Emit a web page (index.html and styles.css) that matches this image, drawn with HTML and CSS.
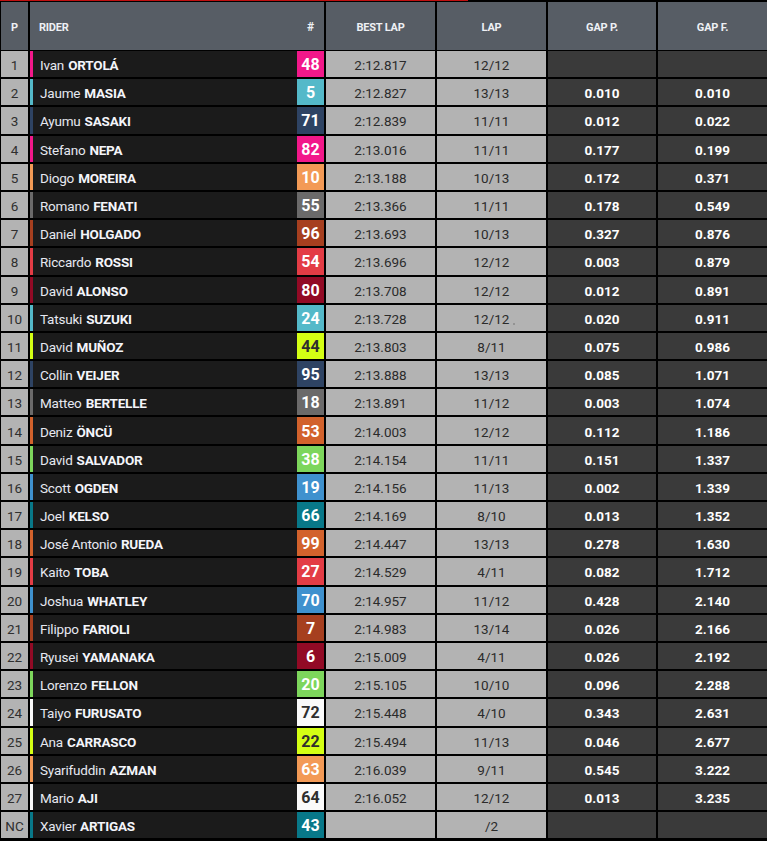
FILE: index.html
```html
<!DOCTYPE html>
<html>
<head>
<meta charset="utf-8">
<link rel="stylesheet" href="styles.css">
</head>
<body>
<div class="topline"></div>
<div class="table">
  <div class="row head">
    <div class="cell p">P</div>
    <div class="cell rider-h"><span>RIDER</span><span class="hash">#</span></div>
    <div class="cell">BEST LAP</div>
    <div class="cell">LAP</div>
    <div class="cell">GAP P.</div>
    <div class="cell">GAP F.</div>
  </div>
  <div class="row"><div class="cell p">1</div><div class="rider c-pink"><div class="name">Ivan <b>ORTOLÁ</b></div><div class="num">48</div></div><div class="cell lt">2:12.817</div><div class="cell lt">12/12</div><div class="cell gap"></div><div class="cell gap"></div></div>
  <div class="row"><div class="cell p">2</div><div class="rider c-teal"><div class="name">Jaume <b>MASIA</b></div><div class="num">5</div></div><div class="cell lt">2:12.827</div><div class="cell lt">13/13</div><div class="cell gap">0.010</div><div class="cell gap">0.010</div></div>
  <div class="row"><div class="cell p">3</div><div class="rider c-navy"><div class="name">Ayumu <b>SASAKI</b></div><div class="num">71</div></div><div class="cell lt">2:12.839</div><div class="cell lt">11/11</div><div class="cell gap">0.012</div><div class="cell gap">0.022</div></div>
  <div class="row"><div class="cell p">4</div><div class="rider c-pink"><div class="name">Stefano <b>NEPA</b></div><div class="num">82</div></div><div class="cell lt">2:13.016</div><div class="cell lt">11/11</div><div class="cell gap">0.177</div><div class="cell gap">0.199</div></div>
  <div class="row"><div class="cell p">5</div><div class="rider c-lorange"><div class="name">Diogo <b>MOREIRA</b></div><div class="num">10</div></div><div class="cell lt">2:13.188</div><div class="cell lt">10/13</div><div class="cell gap">0.172</div><div class="cell gap">0.371</div></div>
  <div class="row"><div class="cell p">6</div><div class="rider c-gray"><div class="name">Romano <b>FENATI</b></div><div class="num">55</div></div><div class="cell lt">2:13.366</div><div class="cell lt">11/11</div><div class="cell gap">0.178</div><div class="cell gap">0.549</div></div>
  <div class="row"><div class="cell p">7</div><div class="rider c-brown"><div class="name">Daniel <b>HOLGADO</b></div><div class="num">96</div></div><div class="cell lt">2:13.693</div><div class="cell lt">10/13</div><div class="cell gap">0.327</div><div class="cell gap">0.876</div></div>
  <div class="row"><div class="cell p">8</div><div class="rider c-red"><div class="name">Riccardo <b>ROSSI</b></div><div class="num">54</div></div><div class="cell lt">2:13.696</div><div class="cell lt">12/12</div><div class="cell gap">0.003</div><div class="cell gap">0.879</div></div>
  <div class="row"><div class="cell p">9</div><div class="rider c-dred"><div class="name">David <b>ALONSO</b></div><div class="num">80</div></div><div class="cell lt">2:13.708</div><div class="cell lt">12/12</div><div class="cell gap">0.012</div><div class="cell gap">0.891</div></div>
  <div class="row"><div class="cell p">10</div><div class="rider c-teal"><div class="name">Tatsuki <b>SUZUKI</b></div><div class="num">24</div></div><div class="cell lt">2:13.728</div><div class="cell lt">12/12<span class="dot"></span></div><div class="cell gap">0.020</div><div class="cell gap">0.911</div></div>
  <div class="row"><div class="cell p">11</div><div class="rider c-lime"><div class="name">David <b>MUÑOZ</b></div><div class="num">44</div></div><div class="cell lt">2:13.803</div><div class="cell lt">8/11</div><div class="cell gap">0.075</div><div class="cell gap">0.986</div></div>
  <div class="row"><div class="cell p">12</div><div class="rider c-navy"><div class="name">Collin <b>VEIJER</b></div><div class="num">95</div></div><div class="cell lt">2:13.888</div><div class="cell lt">13/13</div><div class="cell gap">0.085</div><div class="cell gap">1.071</div></div>
  <div class="row"><div class="cell p">13</div><div class="rider c-gray"><div class="name">Matteo <b>BERTELLE</b></div><div class="num">18</div></div><div class="cell lt">2:13.891</div><div class="cell lt">11/12</div><div class="cell gap">0.003</div><div class="cell gap">1.074</div></div>
  <div class="row"><div class="cell p">14</div><div class="rider c-orange"><div class="name">Deniz <b>ÖNCÜ</b></div><div class="num">53</div></div><div class="cell lt">2:14.003</div><div class="cell lt">12/12</div><div class="cell gap">0.112</div><div class="cell gap">1.186</div></div>
  <div class="row"><div class="cell p">15</div><div class="rider c-green"><div class="name">David <b>SALVADOR</b></div><div class="num">38</div></div><div class="cell lt">2:14.154</div><div class="cell lt">11/11</div><div class="cell gap">0.151</div><div class="cell gap">1.337</div></div>
  <div class="row"><div class="cell p">16</div><div class="rider c-blue"><div class="name">Scott <b>OGDEN</b></div><div class="num">19</div></div><div class="cell lt">2:14.156</div><div class="cell lt">11/13</div><div class="cell gap">0.002</div><div class="cell gap">1.339</div></div>
  <div class="row"><div class="cell p">17</div><div class="rider c-dteal"><div class="name">Joel <b>KELSO</b></div><div class="num">66</div></div><div class="cell lt">2:14.169</div><div class="cell lt">8/10</div><div class="cell gap">0.013</div><div class="cell gap">1.352</div></div>
  <div class="row"><div class="cell p">18</div><div class="rider c-orange"><div class="name">José Antonio <b>RUEDA</b></div><div class="num">99</div></div><div class="cell lt">2:14.447</div><div class="cell lt">13/13</div><div class="cell gap">0.278</div><div class="cell gap">1.630</div></div>
  <div class="row"><div class="cell p">19</div><div class="rider c-red"><div class="name">Kaito <b>TOBA</b></div><div class="num">27</div></div><div class="cell lt">2:14.529</div><div class="cell lt">4/11</div><div class="cell gap">0.082</div><div class="cell gap">1.712</div></div>
  <div class="row"><div class="cell p">20</div><div class="rider c-blue"><div class="name">Joshua <b>WHATLEY</b></div><div class="num">70</div></div><div class="cell lt">2:14.957</div><div class="cell lt">11/12</div><div class="cell gap">0.428</div><div class="cell gap">2.140</div></div>
  <div class="row"><div class="cell p">21</div><div class="rider c-brown"><div class="name">Filippo <b>FARIOLI</b></div><div class="num">7</div></div><div class="cell lt">2:14.983</div><div class="cell lt">13/14</div><div class="cell gap">0.026</div><div class="cell gap">2.166</div></div>
  <div class="row"><div class="cell p">22</div><div class="rider c-dred"><div class="name">Ryusei <b>YAMANAKA</b></div><div class="num">6</div></div><div class="cell lt">2:15.009</div><div class="cell lt">4/11</div><div class="cell gap">0.026</div><div class="cell gap">2.192</div></div>
  <div class="row"><div class="cell p">23</div><div class="rider c-green"><div class="name">Lorenzo <b>FELLON</b></div><div class="num">20</div></div><div class="cell lt">2:15.105</div><div class="cell lt">10/10</div><div class="cell gap">0.096</div><div class="cell gap">2.288</div></div>
  <div class="row"><div class="cell p">24</div><div class="rider c-white"><div class="name">Taiyo <b>FURUSATO</b></div><div class="num">72</div></div><div class="cell lt">2:15.448</div><div class="cell lt">4/10</div><div class="cell gap">0.343</div><div class="cell gap">2.631</div></div>
  <div class="row"><div class="cell p">25</div><div class="rider c-lime"><div class="name">Ana <b>CARRASCO</b></div><div class="num">22</div></div><div class="cell lt">2:15.494</div><div class="cell lt">11/13</div><div class="cell gap">0.046</div><div class="cell gap">2.677</div></div>
  <div class="row"><div class="cell p">26</div><div class="rider c-lorange"><div class="name">Syarifuddin <b>AZMAN</b></div><div class="num">63</div></div><div class="cell lt">2:16.039</div><div class="cell lt">9/11</div><div class="cell gap">0.545</div><div class="cell gap">3.222</div></div>
  <div class="row"><div class="cell p">27</div><div class="rider c-white"><div class="name">Mario <b>AJI</b></div><div class="num">64</div></div><div class="cell lt">2:16.052</div><div class="cell lt">12/12</div><div class="cell gap">0.013</div><div class="cell gap">3.235</div></div>
  <div class="row"><div class="cell p">NC</div><div class="rider c-dteal"><div class="name">Xavier <b>ARTIGAS</b></div><div class="num">43</div></div><div class="cell lt"></div><div class="cell lt">/2</div><div class="cell gap"></div><div class="cell gap"></div></div>
</div>
</body>
</html>
```
FILE: styles.css
```css
html, body {
  margin: 0;
  padding: 0;
  background: #000;
}
body {
  font-family: Roboto, "Liberation Sans", sans-serif;
  font-size: 13.5px;
  width: 767px;
  height: 841px;
  overflow: hidden;
}
.topline {
  width: 468px;
  height: 1px;
  background: #c01010;
}
.table {
  margin-top: 1px;
  padding-left: 1px;
  display: flex;
  flex-direction: column;
  row-gap: 2px;
}
.row {
  display: grid;
  grid-template-columns: 27px 294px 109px 109px 108px 109px;
  column-gap: 2px;
  height: 26.2px;
}
.row.head {
  height: 48px;
  margin-bottom: -1px;
}
.cell {
  display: flex;
  align-items: center;
  justify-content: center;
  position: relative;
  padding-top: 2px;
}
.head .cell {
  background: #575d65;
  color: #eef0f4;
  font-weight: 700;
  font-size: 11px;
  letter-spacing: -0.2px;
}
.head .rider-h {
  justify-content: space-between;
  padding: 2px 10px 0 9px;
}
.head .hash {
  font-size: 12px;
}
.row .p {
  background: #b3b3b3;
  color: #2f2f2f;
}
.head .p {
  background: #575d65;
  color: #eef0f4;
}
.lt {
  background: #b3b3b3;
  color: #2b2b2b;
}
.gap {
  background: #3a3a3a;
  color: #fff;
  font-weight: 700;
}
.rider {
  display: flex;
  background: #1b1b1b;
  border-left: 3px solid var(--c);
}
.name {
  flex: 1;
  display: flex;
  align-items: center;
  padding: 2px 0 0 7px;
  color: #e6e8f0;
  white-space: nowrap;
  letter-spacing: -0.2px;
}
.name b {
  margin-left: 4px;
  color: #f4f5fa;
  font-weight: 700;
}
.num {
  width: 27px;
  background: var(--c);
  color: #fff;
  font-weight: 700;
  font-size: 16px;
  display: flex;
  align-items: center;
  justify-content: center;
  padding-top: 1px;
}
.dot {
  position: absolute;
  left: 76px;
  top: 18px;
  width: 2px;
  height: 2px;
  border-radius: 1px;
  background: #888;
}
.c-pink { --c: #f2188a; }
.c-teal { --c: #54b9c9; }
.c-navy { --c: #2e4363; }
.c-lorange { --c: #f39a56; }
.c-gray { --c: #6b6a6a; }
.c-brown { --c: #a63f1f; }
.c-red { --c: #e33c45; }
.c-dred { --c: #920a25; }
.c-lime { --c: #d4ff14; }
.c-orange { --c: #d2622c; }
.c-green { --c: #7dd65c; }
.c-blue { --c: #3f91ce; }
.c-dteal { --c: #087889; }
.c-white { --c: #fafafa; }
.c-lime .num, .c-white .num { color: #2e2e2e; }
```
